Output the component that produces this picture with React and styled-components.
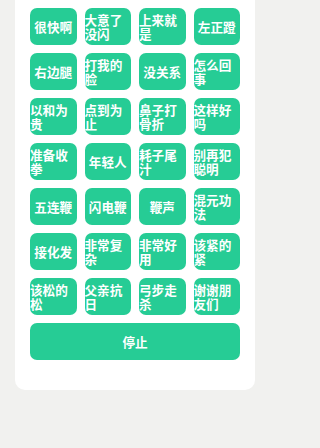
import React from 'react';
import styled, { createGlobalStyle } from 'styled-components';

const GlobalStyle = createGlobalStyle`
  html, body {
    margin: 0;
    padding: 0;
    background-color: #f1f1ef;
    font-family: "Noto Sans CJK SC", "Noto Sans", sans-serif;
  }
  #root {
    min-height: 448px;
  }
`

const Page = styled.div`
  box-sizing: border-box;
  width: 270px;
  height: 448px;
  padding: 0 15px;
  overflow: hidden;
`

const Card = styled.div`
  margin-top: -51px;
  background-color: #ffffff;
  border-radius: 10px;
  padding: 14px 15px 30px;
`

const Grid = styled.div`
  display: grid;
  grid-template-columns: repeat(4, 1fr);
  column-gap: 8px;
  row-gap: 8px;
`

const SoundButton = styled.button`
  display: flex;
  align-items: center;
  justify-content: center;
  height: 37px;
  min-width: 0;
  padding: 0;
  border: none;
  border-radius: 7px;
  background-color: #26cc95;
  color: #ffffff;
  font-family: inherit;
  font-size: 12.6px;
  font-weight: 700;
  line-height: 14px;
  overflow: hidden;
  cursor: pointer;
`

const Label = styled.span`
  text-align: left;
`

const StopButton = styled(SoundButton)`
  width: 100%;
  margin-top: 8px;
`

const sounds = [
  '我大意了', '年轻人不讲武德', '耗子尾汁', '闪电五连鞭',
  '很快啊', '大意了没闪', '上来就是', '左正蹬',
  '右边腿', '打我的脸', '没关系', '怎么回事',
  '以和为贵', '点到为止', '鼻子打骨折', '这样好吗',
  '准备收拳', '年轻人', '耗子尾汁', '别再犯聪明',
  '五连鞭', '闪电鞭', '鞭声', '混元功法',
  '接化发', '非常复杂', '非常好用', '该紧的紧',
  '该松的松', '父亲抗日', '弓步走杀', '谢谢朋友们'
]

const App = () => {
  return (
    <Page>
      <GlobalStyle />
      <Card>
        <Grid>
          {sounds.map((name, i) => (
            <SoundButton key={i}>
              <Label>{name}</Label>
            </SoundButton>
          ))}
        </Grid>
        <StopButton>停止</StopButton>
      </Card>
    </Page>
  )
}

export default App;
